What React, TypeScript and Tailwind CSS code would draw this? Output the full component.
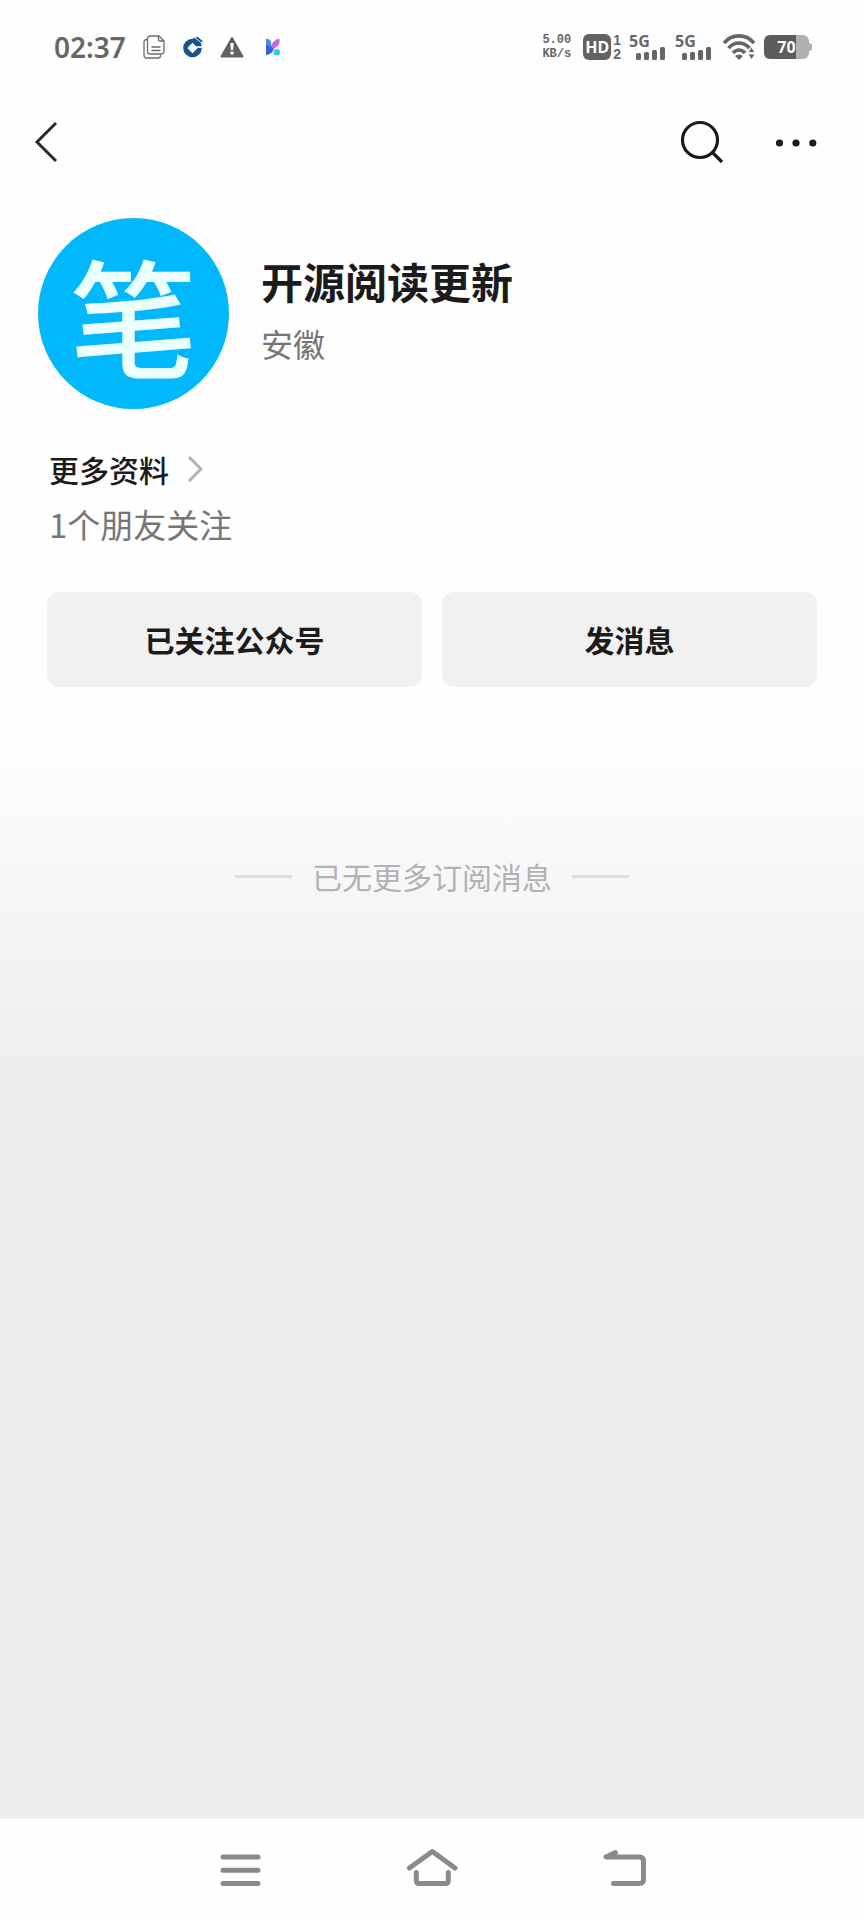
function StatusBar() {
  return (
    <div className="flex h-[94px] items-center justify-between pl-[54px] pr-[52px] font-['Noto_Sans',sans-serif] text-[#666]">
      <div className="flex items-center">
        <time className="text-[28px] leading-8 font-semibold">02:37</time>
        <NotesIcon />
        <BankIcon />
        <WarningIcon />
        <KIcon />
      </div>

      <div className="flex items-center">
        <div className="mr-3 text-center font-['Liberation_Mono',monospace] text-xs leading-[14px] font-bold">
          <p>5.00</p>
          <p>KB/s</p>
        </div>
        <span className="flex h-[26px] w-7 items-center justify-center rounded-md bg-[#626262] text-base leading-none font-bold text-white">
          HD
        </span>
        <div className="mr-2 ml-0.5 text-center font-['Liberation_Sans',sans-serif] text-sm leading-[14px] font-bold">
          <p>1</p>
          <p>2</p>
        </div>
        <Signal />
        <Signal />
        <WifiIcon />
        <Battery level={70} />
      </div>
    </div>
  )
}

function NotesIcon() {
  return (
    <svg
      className="ml-[17px] h-6 w-[22px]"
      viewBox="0 0 22 24"
      fill="none"
      stroke="#6a6a6a"
      strokeWidth="1.3"
      strokeLinecap="round"
      strokeLinejoin="round"
    >
      <path d="M7 1h9l5 5v10.500a2.500 2.500 0 0 1-2.500 2.500H7a2.500 2.500 0 0 1-2.500-2.500v-13A2.500 2.500 0 0 1 7 1Z" />
      <path d="M15.500 1.300V4.500q0 1.500 1.500 1.500h3.500M9 12h8M9 15.500h8" />
      <path d="M4 4.500H3.500A2.500 2.500 0 0 0 1 7v13.500A2.500 2.500 0 0 0 3.500 23H15a2.500 2.500 0 0 0 2.500-2.500" />
    </svg>
  )
}

function BankIcon() {
  return (
    <svg className="ml-[18px] h-[22px] w-5" viewBox="0 0 20 22">
      <circle cx="9.500" cy="12" r="9.300" fill="#14538f" />
      <path d="M9.500 6.800 14.700 12l-5.200 5.200L4.300 12Z" fill="#fefefe" />
      <path d="M14.700 12 13 10.300H20v1.500Z" fill="#fefefe" />
      <path d="M9 .5h6l5 5v3Z" fill="#fefefe" />
      <path
        d="M10.500 2.200 18 8.500M13.500 1.200 19 5.800"
        stroke="#14538f"
        strokeWidth="1.900"
      />
    </svg>
  )
}

function WarningIcon() {
  return (
    <svg className="ml-[17px] h-[22px] w-6" viewBox="0 0 24 22">
      <path
        d="M12 2 22.500 20.500H1.500Z"
        fill="#626262"
        stroke="#626262"
        strokeWidth="2"
        strokeLinejoin="round"
      />
      <path d="M10.300 7h3.400l-.6 7h-2.200Z" fill="#fff" />
      <circle cx="12" cy="17" r="1.700" fill="#fff" />
    </svg>
  )
}

function KIcon() {
  return (
    <svg className="ml-[21px] h-[18px] w-4" viewBox="0 0 16 18">
      <path d="M1 1q5-.5 5 4v7l-5 2Z" fill="#3f8cf5" />
      <path d="M6 8Q8 2 14.500.500V5Q14 7.500 9 10.500L6 11Z" fill="#c565e2" />
      <path d="M1 6.500 9 10.500Q7 17 1 17Z" fill="#3a5fe0" />
      <circle cx="11.800" cy="14.200" r="3.300" fill="#35c8f2" />
    </svg>
  )
}

function Signal() {
  return (
    <div className="mr-[9px] w-[37px]">
      <p className="h-3 text-base leading-3 font-bold">5G</p>
      <svg className="ml-[7px] h-[13px] w-[29px]" viewBox="0 0 29 13" fill="#666">
        <rect x="0" y="6" width="5" height="7" rx="1.500" />
        <rect x="8" y="5" width="5" height="8" rx="1.500" />
        <rect x="16" y="3" width="5" height="10" rx="1.500" />
        <rect x="24" y="0" width="5" height="13" rx="1.500" />
      </svg>
    </div>
  )
}

function WifiIcon() {
  return (
    <svg
      className="ml-0.5 h-[26px] w-8"
      viewBox="0 0 32 26"
      fill="none"
      stroke="#666"
      strokeWidth="3.600"
    >
      <path d="M1 9C9-.5 23-.5 31 9" />
      <path d="M5.500 14.200c6-7 15-7 21 0" />
      <path d="M10 19c3.700-4 8.300-4 12 0" />
      <path d="M12 22q4-3 8 0L16 26Z" fill="#666" stroke="none" />
      <path
        d="M28.500 13l3.500 5.500h-7ZM28.500 25.500l3.500-5.500h-7Z"
        fill="#666"
        stroke="#fefefe"
        strokeWidth=".8"
      />
    </svg>
  )
}

function Battery({ level }: { level: number }) {
  return (
    <div className="ml-[9px] flex items-center">
      <div className="relative flex h-6 w-[45px] items-center justify-center overflow-hidden rounded-md bg-[#b0b0b0]">
        <span
          className="absolute inset-y-0 left-0 bg-[#5c5c5c]"
          style={{ width: `${level}%` }}
        />
        <span className="relative text-base leading-none font-bold text-white">
          {level}
        </span>
      </div>
      <span className="h-2 w-[3px] rounded-r bg-[#b0b0b0]" />
    </div>
  )
}

function Header() {
  return (
    <header className="flex h-24 items-center pl-[34px] pr-[46px]">
      <button aria-label="返回">
        <svg className="h-11 w-6" viewBox="0 0 24 44" fill="none">
          <path d="M22 3 3 22l19 19" stroke="#2b2b2b" strokeWidth="3" />
        </svg>
      </button>

      <button className="ml-auto" aria-label="搜索">
        <svg
          className="size-11"
          viewBox="0 0 44 44"
          fill="none"
          stroke="#1b1b1b"
          strokeWidth="3.200"
        >
          <circle cx="20" cy="20" r="17.500" />
          <path d="m32 32 10 10" />
        </svg>
      </button>

      <button className="ml-[50px]" aria-label="更多">
        <svg className="h-11 w-[44px]" viewBox="0 0 44 44" fill="#1b1b1b">
          <circle cx="5.500" cy="23" r="3.600" />
          <circle cx="22" cy="23" r="3.600" />
          <circle cx="38.800" cy="23" r="3.600" />
        </svg>
      </button>
    </header>
  )
}

function Profile() {
  return (
    <section className="flex items-center pt-7 pl-[38px]">
      <div className="flex size-[191px] shrink-0 items-center justify-center rounded-full bg-[#00b8fb] text-[128px] leading-none font-medium text-[#ecffff]">
        笔
      </div>

      <div className="ml-8">
        <h1 className="text-[42px] leading-[54px] font-bold text-[#1b1b1b]">
          开源阅读更新
        </h1>
        <p className="mt-2 pb-1 text-[32px] leading-[54px] text-[#767676]">
          安徽
        </p>
      </div>
    </section>
  )
}

function ActionButton({ label }: { label: string }) {
  return (
    <button className="h-[95px] flex-1 rounded-xl bg-[#f1f1f1] text-[30px] font-bold text-[#1b1b1b]">
      {label}
    </button>
  )
}

function NavBar() {
  return (
    <nav className="h-[101px] bg-[#fefefe]">
      <div className="mx-auto grid h-full w-2/3 grid-cols-3 place-items-center">
        <button aria-label="最近任务">
          <NavIcon d="M9 13h35M9 26.300h35M9 39.500h35" />
        </button>
        <button aria-label="主屏幕">
          <NavIcon d="M3.500 24 26.300 7.500 49 24M10.300 28.500v8q0 3 3 3h26q3 0 3-3v-8" />
        </button>
        <button aria-label="返回上一页">
          <NavIcon d="M17.500 8.500 8 13h33.500q4 0 4 4v18.500q0 4-4 4H15.500" />
        </button>
      </div>
    </nav>
  )
}

function NavIcon({ d }: { d: string }) {
  return (
    <svg
      className="size-[52px]"
      viewBox="0 0 52 52"
      fill="none"
      stroke="#8a8a8a"
      strokeWidth="5"
      strokeLinecap="round"
      strokeLinejoin="round"
    >
      <path d={d} />
    </svg>
  )
}

export default function App() {
  return (
    <div className="flex min-h-screen flex-col bg-[linear-gradient(#fefefe_740px,#eeeeee_1060px)] font-['Noto_Sans_CJK_SC',sans-serif]">
      <StatusBar />
      <Header />

      <main className="flex-1">
        <Profile />

        <div className="px-[47px]">
          <a
            href="#more"
            className="mt-10 flex items-center pl-0.5 text-[30px] leading-10 font-medium text-[#1b1b1b]"
          >
            更多资料
            <svg className="ml-[18px] h-7 w-4" viewBox="0 0 16 28" fill="none">
              <path d="m2 2 12 12L2 26" stroke="#b2b2b2" strokeWidth="3" />
            </svg>
          </a>
          <p className="mt-[15px] pl-0.5 text-[33px] leading-10 text-[#767676]">
            1个朋友关注
          </p>

          <div className="mt-12 flex gap-5">
            <ActionButton label="已关注公众号" />
            <ActionButton label="发消息" />
          </div>
        </div>

        <div className="mt-[169px] flex items-center justify-center gap-5 text-[30px] leading-10 text-[#b2b2b2]">
          <span className="h-[3px] w-[57px] bg-[#dedede]" />
          <p>已无更多订阅消息</p>
          <span className="h-[3px] w-[57px] bg-[#dedede]" />
        </div>
      </main>

      <NavBar />
    </div>
  )
}
